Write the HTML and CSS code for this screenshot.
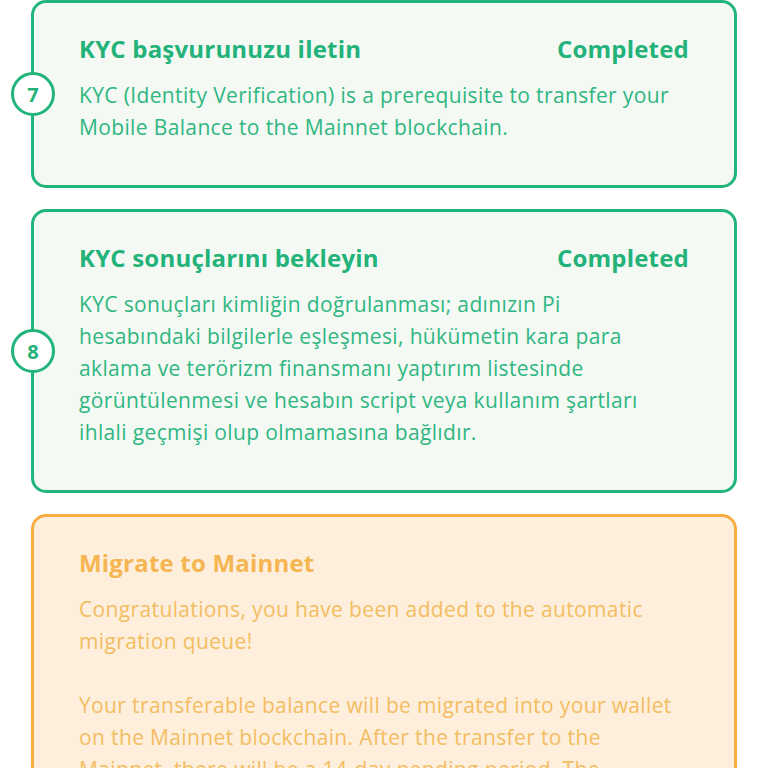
FILE: index.html
```html
<!DOCTYPE html>
<html lang="tr">
<head>
<meta charset="utf-8">
<link rel="stylesheet" href="styles.css">
</head>
<body>
<div class="steps">
  <section class="card done">
    <div class="num">7</div>
    <div class="head">
      <h2 class="title">KYC başvurunuzu iletin</h2>
      <span class="status">Completed</span>
    </div>
    <p class="text">KYC (Identity Verification) is a prerequisite to transfer your Mobile Balance to the Mainnet blockchain.</p>
  </section>
  <section class="card done">
    <div class="num">8</div>
    <div class="head">
      <h2 class="title">KYC sonuçlarını bekleyin</h2>
      <span class="status">Completed</span>
    </div>
    <p class="text">KYC sonuçları kimliğin doğrulanması; adınızın Pi hesabındaki bilgilerle eşleşmesi, hükümetin kara para aklama ve terörizm finansmanı yaptırım listesinde görüntülenmesi ve hesabın script veya kullanım şartları ihlali geçmişi olup olmamasına bağlıdır.</p>
  </section>
  <section class="card pending">
    <div class="head">
      <h2 class="title">Migrate to Mainnet</h2>
    </div>
    <p class="text">Congratulations, you have been added to the automatic migration queue!</p>
    <p class="text">Your transferable balance will be migrated into your wallet on the Mainnet blockchain. After the transfer to the Mainnet, there will be a 14-day pending period. The balance will then be available in your wallet.</p>
  </section>
</div>
</body>
</html>
```
FILE: styles.css
```css
html, body {
  margin: 0;
  padding: 0;
  background: #ffffff;
}
body {
  font-family: "Open Sans", "Lato", sans-serif;
  height: 768px;
  overflow: hidden;
}
.steps {
  display: flex;
  flex-direction: column;
  gap: 21px;
  padding-left: 31px;
  width: 706px;
}
.card {
  position: relative;
  border: 3px solid #21b47b;
  border-radius: 15px;
  background: #f4faf3;
  padding: 30px 45px 42px 45px;
}
.card.pending {
  border-color: #f8ae45;
  background: #fdefdb;
}
.head {
  display: flex;
  justify-content: space-between;
  align-items: center;
}
.title, .status {
  margin: 0;
  font-size: 24px;
  line-height: 32px;
  font-weight: 700;
  letter-spacing: 0.2px;
  color: #22b27a;
}
.text {
  margin: 14px 0 0 0;
  font-size: 21px;
  line-height: 32px;
  letter-spacing: 0.36px;
  color: #2fb682;
  max-width: 600px;
}
.pending .title { color: #f5b551; }
.pending .text { color: #f4bd62; }
.pending .text + .text { margin-top: 32px; }
.num {
  position: absolute;
  left: -23px;
  top: 50%;
  transform: translateY(-50%);
  width: 38px;
  height: 38px;
  border: 3px solid #21b47b;
  border-radius: 50%;
  background: #ffffff;
  color: #22b27a;
  font-size: 20px;
  font-weight: 700;
  display: flex;
  align-items: center;
  justify-content: center;
}
```
